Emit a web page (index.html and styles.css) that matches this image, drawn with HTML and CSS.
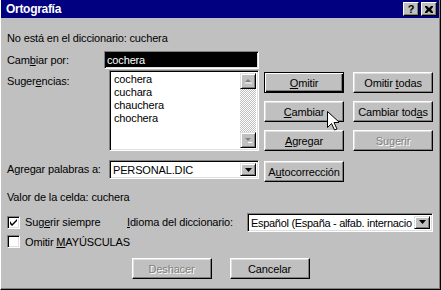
FILE: index.html
```html
<!DOCTYPE html>
<html lang="es">
<head>
    <meta charset="UTF-8">
    <title>Ortografía</title>
    <link rel="stylesheet" href="styles.css">
</head>
<body>
    <div class="window">
        <div class="titlebar">
            <span class="title">Ortografía</span>
            <div class="tb-buttons">
                <span class="tb-btn">?</span>
                <span class="tb-btn">
                    <svg width="8" height="7" viewBox="0 0 8 7"><path d="M0 0h2l2 2l2-2h2v1l-2 2.5l2 2.5v1h-2l-2-2l-2 2h-2v-1l2-2.5l-2-2.5z" fill="#000"/></svg>
                </span>
            </div>
        </div>

        <div class="content">
            <div class="notfound">No está en el diccionario: cuchera</div>

            <div class="top">
                <div class="left">
                    <div class="row change">
                        <span class="label">Cam<u>b</u>iar por:</span>
                        <div class="field selected"><span>cochera</span></div>
                    </div>
                    <div class="row sugg">
                        <span class="label">Suger<u>e</u>ncias:</span>
                        <div class="listbox">
                            <ul class="items">
                                <li>cochera</li>
                                <li>cuchara</li>
                                <li>chauchera</li>
                                <li>chochera</li>
                            </ul>
                            <div class="scrollbar">
                                <span class="sb-btn">
                                    <svg width="8" height="5" viewBox="0 0 8 5"><path d="M4 0l3 3h-6z" fill="#808080"/><path d="M1 4h7" stroke="#fff"/></svg>
                                </span>
                                <span class="sb-track"></span>
                                <span class="sb-btn">
                                    <svg width="8" height="5" viewBox="0 0 8 5"><path d="M1 0h6l-3 3z" fill="#808080"/><path d="M4 4.5h4" stroke="#fff"/></svg>
                                </span>
                            </div>
                        </div>
                    </div>
                </div>

                <div class="buttons">
                    <button class="btn default"><u>O</u>mitir</button>
                    <button class="btn">Omitir <u>t</u>odas</button>
                    <button class="btn"><u>C</u>ambiar</button>
                    <button class="btn">Cambiar tod<u>a</u>s</button>
                    <button class="btn"><u>A</u>gregar</button>
                    <button class="btn disabled">Sugerir</button>
                </div>
            </div>

            <div class="row add">
                <span class="label">A<u>g</u>regar palabras a:</span>
                <div class="combo dic">
                    <span class="combo-text">PERSONAL.DIC</span>
                    <span class="drop">
                        <svg width="7" height="4" viewBox="0 0 7 4"><path d="M0 0h7l-3.5 4z" fill="#000"/></svg>
                    </span>
                </div>
                <button class="btn auto">A<u>u</u>tocorrección</button>
            </div>

            <div class="valor">Valor de la celda: cuchera</div>

            <div class="row options">
                <div class="check-item">
                    <span class="checkbox">
                        <svg width="7" height="7" viewBox="0 0 7 7"><path d="M0 2v3l2 2l5-5v-2l-5 5z" fill="#000"/></svg>
                    </span>
                    <span>Sug<u>e</u>rir siempre</span>
                </div>
                <span class="lang-label"><u>I</u>dioma del diccionario:</span>
                <div class="combo lang">
                    <span class="combo-text">Español (España - alfab. internacio</span>
                    <span class="drop">
                        <svg width="7" height="4" viewBox="0 0 7 4"><path d="M0 0h7l-3.5 4z" fill="#000"/></svg>
                    </span>
                </div>
            </div>

            <div class="row mayus">
                <span class="checkbox"></span>
                <span>Omitir <u>M</u>AYÚSCULAS</span>
            </div>

            <div class="footer">
                <button class="btn disabled">Deshacer</button>
                <button class="btn">Cancelar</button>
            </div>
        </div>

        <svg class="cursor" width="12" height="20" viewBox="0 0 12 20">
            <path d="M0.5 0.5v16l4-4l3 6.5l2.5-1l-3-6.5h5.5z" fill="#fff" stroke="#000" stroke-linejoin="miter"/>
        </svg>
    </div>
</body>
</html>
```

FILE: styles.css
```css
* {
    box-sizing: border-box;
}
body {
    margin: 0;
    font-family: "Liberation Sans", Arial, sans-serif;
    font-size: 11px;
    letter-spacing: -0.15px;
    color: #000;
}
u {
    text-decoration-thickness: 1px;
    text-underline-offset: 1px;
}
.window {
    position: relative;
    width: 441px;
    height: 290px;
    background: #c0c0c0;
    border-left: 1px solid #fff;
    border-right: 1px solid #000;
    border-bottom: 1px solid #000;
    box-shadow: inset -1px -1px #808080;
    overflow: hidden;
}
.titlebar {
    height: 18px;
    margin-right: 1px;
    padding: 0 2px 0 5px;
    background: #000080;
    color: #fff;
    display: flex;
    align-items: center;
    justify-content: space-between;
}
.title {
    font-weight: bold;
    font-size: 12px;
    letter-spacing: -0.3px;
}
.tb-buttons {
    display: flex;
    gap: 2px;
}
.tb-btn {
    width: 16px;
    height: 14px;
    background: #c0c0c0;
    color: #000;
    font-weight: bold;
    font-size: 11px;
    display: flex;
    align-items: center;
    justify-content: center;
    border-top: 1px solid #fff;
    border-left: 1px solid #fff;
    border-right: 1px solid #000;
    border-bottom: 1px solid #000;
    box-shadow: inset -1px -1px #808080;
}

.content {
    padding-left: 6px;
}
.notfound {
    margin-top: 14px;
    line-height: 13px;
}
.top {
    display: flex;
    margin-top: 6px;
}
.left {
    width: 252px;
}
.row {
    display: flex;
}
.label {
    flex: none;
}

/* sunken fields */
.field,
.listbox,
.combo,
.checkbox {
    background: #fff;
    border-top: 1px solid #808080;
    border-left: 1px solid #808080;
    border-right: 1px solid #fff;
    border-bottom: 1px solid #fff;
    box-shadow: inset 1px 1px #000, inset -1px -1px #dfdfdf;
}

.change {
    height: 18px;
    align-items: center;
}
.change .label {
    width: 97px;
}
.field {
    flex: 1;
    height: 18px;
    padding: 2px 2px 0 2px;
    line-height: 13px;
}
.field.selected {
    background: #000;
    color: #fff;
}

.sugg {
    margin-top: 1px;
}
.sugg .label {
    width: 102px;
    padding-top: 5px;
    line-height: 13px;
}
.listbox {
    width: 150px;
    height: 81px;
    padding: 2px;
    display: flex;
}
.items {
    flex: 1;
    margin: 0;
    padding: 0 0 0 2px;
    list-style: none;
    line-height: 13px;
}
.scrollbar {
    width: 16px;
    display: flex;
    flex-direction: column;
}
.sb-track {
    flex: 1;
    background: repeating-conic-gradient(#fff 0 25%, #c0c0c0 0 50%) 0 0 / 2px 2px;
}
.sb-btn {
    height: 16px;
    background: #c0c0c0;
    display: flex;
    align-items: center;
    justify-content: center;
    border-top: 1px solid #dfdfdf;
    border-left: 1px solid #dfdfdf;
    border-right: 1px solid #000;
    border-bottom: 1px solid #000;
    box-shadow: inset 1px 1px #fff, inset -1px -1px #808080;
}

.buttons {
    margin: 21px 0 0 5px;
    display: grid;
    grid-template-columns: 80px 80px;
    grid-auto-rows: 21px;
    column-gap: 9px;
    row-gap: 8px;
}
.btn {
    width: 80px;
    height: 21px;
    padding: 0;
    font-family: inherit;
    font-size: 11px;
    letter-spacing: inherit;
    color: #000;
    background: #c0c0c0;
    border-top: 1px solid #fff;
    border-left: 1px solid #fff;
    border-right: 1px solid #000;
    border-bottom: 1px solid #000;
    box-shadow: inset -1px -1px #808080, inset 1px 1px #dfdfdf;
    border-radius: 0;
}
.btn.default {
    border: 1px solid #000;
    box-shadow: inset 1px 1px #fff, inset -1px -1px #000, inset -2px -2px #808080;
}
.btn.disabled {
    color: #808080;
    text-shadow: 1px 1px #fff;
}

.add {
    margin-top: 9px;
    height: 22px;
    align-items: flex-start;
}
.add .label {
    width: 102px;
    line-height: 19px;
}
.combo {
    height: 19px;
    padding: 2px;
    display: flex;
    align-items: stretch;
}
.combo-text {
    flex: 1;
    padding-left: 1px;
    line-height: 15px;
    white-space: nowrap;
    overflow: hidden;
}
.drop {
    width: 16px;
    flex: none;
    background: #c0c0c0;
    display: flex;
    align-items: center;
    justify-content: center;
    border-top: 1px solid #dfdfdf;
    border-left: 1px solid #dfdfdf;
    border-right: 1px solid #000;
    border-bottom: 1px solid #000;
    box-shadow: inset 1px 1px #fff, inset -1px -1px #808080;
}
.dic {
    width: 150px;
}
.btn.auto {
    margin: 1px 0 0 5px;
}

.valor {
    margin-top: 9px;
    line-height: 13px;
}

.options {
    margin-top: 8px;
    height: 20px;
    align-items: center;
}
.check-item {
    width: 120px;
    display: flex;
    align-items: center;
}
.checkbox {
    width: 13px;
    height: 13px;
    margin-right: 5px;
    flex: none;
    display: flex;
    align-items: center;
    justify-content: center;
}
.lang-label {
    width: 120px;
}
.lang {
    width: 186px;
}
.lang .combo-text {
    letter-spacing: -0.3px;
}

.mayus {
    margin-top: 3px;
    height: 13px;
    align-items: center;
}

.footer {
    margin: 10px 0 0 -6px;
    display: flex;
    justify-content: center;
    gap: 18px;
}

.cursor {
    position: absolute;
    left: 326px;
    top: 111px;
}
```
